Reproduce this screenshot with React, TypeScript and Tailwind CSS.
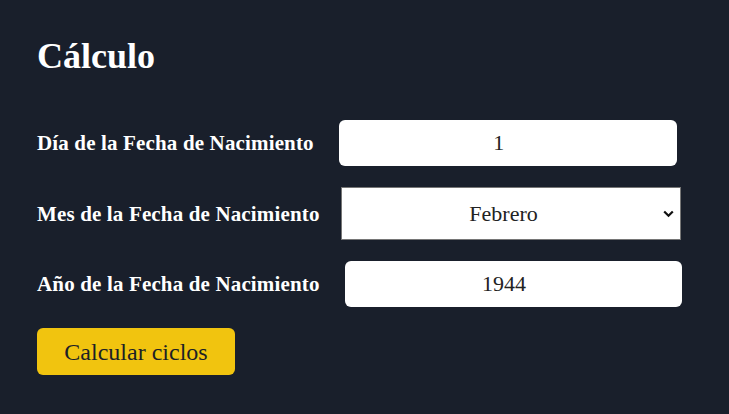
import React, { useState } from "react";

const meses = [
  "Enero",
  "Febrero",
  "Marzo",
  "Abril",
  "Mayo",
  "Junio",
  "Julio",
  "Agosto",
  "Septiembre",
  "Octubre",
  "Noviembre",
  "Diciembre",
];

const App = () => {
  const [dia, setDia] = useState("1");
  const [mes, setMes] = useState("Febrero");
  const [anio, setAnio] = useState("1944");

  return (
    <div className="min-h-[414px] w-full bg-[#191f2b] px-[37px] pt-[35px] font-['Liberation_Serif',serif] text-white">
      {/* ====== Titulo ====== */}
      <h1 className="text-[36px] font-bold leading-[42px]">Cálculo</h1>

      <div className="mt-[43px] flex flex-col gap-[21px]">
        <div className="flex items-center">
          <label className="text-[21px] font-bold leading-6 tracking-[0.15px]">Día de la Fecha de Nacimiento</label>
          <input
            value={dia}
            onChange={(e) => setDia(e.target.value)}
            className="ml-[25px] h-[46px] w-[338px] rounded-md bg-white pr-[18px] text-center font-['Liberation_Serif',serif] text-[22px] text-[#222] outline-none"
          />
        </div>

        <div className="flex items-center">
          <label className="text-[21px] font-bold leading-6 tracking-[0.15px]">Mes de la Fecha de Nacimiento</label>
          <div className="relative ml-[21px]">
            <select
              value={mes}
              onChange={(e) => setMes(e.target.value)}
              className="h-[53px] w-[340px] appearance-none border border-[#767676] bg-white pr-[14px] font-['Liberation_Serif',serif] text-[22px] text-[#222] outline-none [text-align-last:center]"
            >
              {meses.map((m) => (
                <option key={m} value={m}>
                  {m}
                </option>
              ))}
            </select>
            {/* flecha del select */}
            <svg
              className="pointer-events-none absolute right-[7px] top-1/2 -translate-y-1/2"
              width="11"
              height="8"
              viewBox="0 0 11 8"
              fill="none"
            >
              <path d="M1.2 1.5 5.5 5.8 9.8 1.5" stroke="#111" strokeWidth="2.2" />
            </svg>
          </div>
        </div>

        <div className="flex items-center">
          <label className="text-[21px] font-bold leading-6 tracking-[0.15px]">Año de la Fecha de Nacimiento</label>
          <input
            value={anio}
            onChange={(e) => setAnio(e.target.value)}
            className="ml-[25px] h-[46px] w-[337px] rounded-md bg-white pr-[18px] text-center font-['Liberation_Serif',serif] text-[22px] text-[#222] outline-none"
          />
        </div>

        <div>
          <button className="h-[47px] w-[198px] rounded-md bg-[#f1c40f] font-['Liberation_Serif',serif] text-[24px] text-[#1c1f26]">
            Calcular ciclos
          </button>
        </div>
      </div>
    </div>
  );
};

export default App;
